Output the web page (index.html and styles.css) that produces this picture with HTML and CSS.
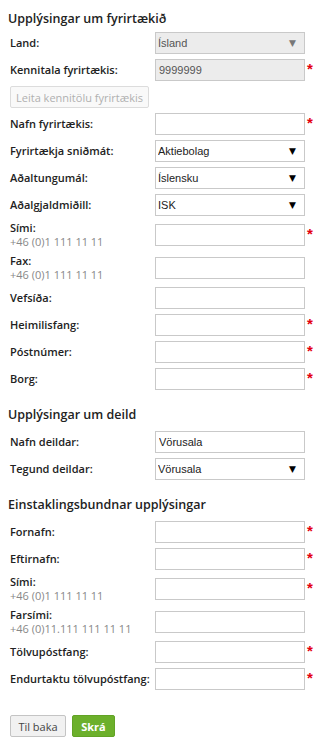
FILE: index.html
```html
<!DOCTYPE html>
<html lang="is">
<head>
    <meta charset="UTF-8">
    <meta name="viewport" content="width=device-width, initial-scale=1.0">
    <title>Skráning</title>
    <link rel="stylesheet" href="styles.css">
</head>
<body>
    <form class="reg-form" onsubmit="return false;">
        <div class="section first">
            <h2>Upplýsingar um fyrirtækið</h2>
            <div class="row">
                <label class="lbl">Land:</label>
                <div class="control">
                    <span class="select locked"><select class="field"><option>Ísland</option></select></span>
                </div>
            </div>
            <div class="row">
                <label class="lbl">Kennitala fyrirtækis:</label>
                <div class="control">
                    <input type="text" class="field locked" value="9999999" readonly>
                    <span class="req">*</span>
                </div>
            </div>
            <div class="row">
                <button type="button" class="lookup-btn">Leita kennitölu fyrirtækis</button>
            </div>
            <div class="row">
                <label class="lbl">Nafn fyrirtækis:</label>
                <div class="control"><input type="text" class="field"><span class="req">*</span></div>
            </div>
            <div class="row">
                <label class="lbl">Fyrirtækja sniðmát:</label>
                <div class="control">
                    <span class="select"><select class="field"><option>Aktiebolag</option></select></span>
                </div>
            </div>
            <div class="row">
                <label class="lbl">Aðaltungumál:</label>
                <div class="control">
                    <span class="select"><select class="field"><option>Íslensku</option></select></span>
                </div>
            </div>
            <div class="row">
                <label class="lbl">Aðalgjaldmiðill:</label>
                <div class="control">
                    <span class="select"><select class="field"><option>ISK</option></select></span>
                </div>
            </div>
            <div class="row">
                <label class="lbl two-line">Sími:<span class="hint">+46 (0)1 111 11 11</span></label>
                <div class="control"><input type="text" class="field"><span class="req">*</span></div>
            </div>
            <div class="row">
                <label class="lbl two-line">Fax:<span class="hint">+46 (0)1 111 11 11</span></label>
                <div class="control"><input type="text" class="field"></div>
            </div>
            <div class="row">
                <label class="lbl">Vefsíða:</label>
                <div class="control"><input type="text" class="field"></div>
            </div>
            <div class="row">
                <label class="lbl">Heimilisfang:</label>
                <div class="control"><input type="text" class="field"><span class="req">*</span></div>
            </div>
            <div class="row">
                <label class="lbl">Póstnúmer:</label>
                <div class="control"><input type="text" class="field"><span class="req">*</span></div>
            </div>
            <div class="row">
                <label class="lbl">Borg:</label>
                <div class="control"><input type="text" class="field"><span class="req">*</span></div>
            </div>
        </div>

        <div class="section">
            <h2>Upplýsingar um deild</h2>
            <div class="row">
                <label class="lbl">Nafn deildar:</label>
                <div class="control"><input type="text" class="field" value="Vörusala"></div>
            </div>
            <div class="row">
                <label class="lbl">Tegund deildar:</label>
                <div class="control">
                    <span class="select"><select class="field"><option>Vörusala</option></select></span>
                </div>
            </div>
        </div>

        <div class="section">
            <h2>Einstaklingsbundnar upplýsingar</h2>
            <div class="row">
                <label class="lbl">Fornafn:</label>
                <div class="control"><input type="text" class="field"><span class="req">*</span></div>
            </div>
            <div class="row">
                <label class="lbl">Eftirnafn:</label>
                <div class="control"><input type="text" class="field"><span class="req">*</span></div>
            </div>
            <div class="row">
                <label class="lbl two-line">Sími:<span class="hint">+46 (0)1 111 11 11</span></label>
                <div class="control"><input type="text" class="field"><span class="req">*</span></div>
            </div>
            <div class="row">
                <label class="lbl two-line">Farsími:<span class="hint">+46 (0)11.111 111 11 11</span></label>
                <div class="control"><input type="text" class="field"></div>
            </div>
            <div class="row">
                <label class="lbl">Tölvupóstfang:</label>
                <div class="control"><input type="text" class="field"><span class="req">*</span></div>
            </div>
            <div class="row">
                <label class="lbl">Endurtaktu tölvupóstfang:</label>
                <div class="control"><input type="text" class="field"><span class="req">*</span></div>
            </div>
        </div>

        <div class="button-container">
            <button type="button" class="back-btn">Til baka</button>
            <button type="submit" class="save-btn">Skrá</button>
        </div>
    </form>
</body>
</html>
```

FILE: styles.css
```css
body {
    margin: 0;
    font-family: "Open Sans", Arial, sans-serif;
    background-color: #fff;
    color: #222;
}
.reg-form {
    padding: 10px 8px 0 8px;
    width: 315px;
}
.section h2 {
    font-size: 12.5px;
    font-weight: 600;
    line-height: 18px;
    color: #222;
    margin: 16px 0 7px 0;
}
.section.first h2 {
    margin: 0 0 4px 0;
}
.row {
    display: flex;
    align-items: center;
    padding-left: 2px;
    margin-bottom: 5px;
}
.lbl {
    width: 145px;
    flex-shrink: 0;
    font-size: 11px;
    font-weight: 600;
    line-height: 22px;
    color: #222;
}
.lbl.two-line {
    line-height: 14px;
}
.hint {
    display: block;
    font-weight: 400;
    color: #888;
}
.control {
    display: flex;
    align-items: flex-start;
}
.field {
    display: block;
    width: 150px;
    height: 22px;
    box-sizing: border-box;
    border: 1px solid #c9c9c9;
    border-radius: 0;
    padding: 0 3px;
    margin: 0;
    font-family: "Liberation Sans", Arial, sans-serif;
    font-size: 11px;
    color: #222;
    background-color: #fff;
    outline: none;
}
.field.locked,
.select.locked .field {
    background-color: #ececec;
    color: #555;
}
.select {
    position: relative;
    display: block;
    height: 22px;
}
.select select {
    appearance: none;
    -webkit-appearance: none;
    padding-left: 2px;
}
.select::after {
    content: "\25BC";
    position: absolute;
    right: 9px;
    top: 5px;
    font-family: "DejaVu Sans", sans-serif;
    font-size: 9px;
    line-height: 12px;
    color: #000;
    pointer-events: none;
}
.select.locked::after {
    color: #777;
}
.req {
    color: #e3000f;
    font-family: "Liberation Sans", Arial, sans-serif;
    font-weight: bold;
    font-size: 15px;
    line-height: 14px;
    margin: 3px 0 0 2px;
}
.lookup-btn {
    width: 139px;
    height: 22px;
    padding: 0;
    border: 1px solid #dcdcdc;
    border-radius: 2px;
    background-color: #f9f9f9;
    color: #b0b0b0;
    font-family: "Open Sans", Arial, sans-serif;
    font-size: 11px;
}
.button-container {
    display: flex;
    gap: 6px;
    margin-top: 25px;
    padding-left: 2px;
}
.back-btn,
.save-btn {
    height: 22px;
    border-radius: 2px;
    font-family: "Open Sans", Arial, sans-serif;
    font-size: 11px;
    cursor: pointer;
}
.back-btn {
    width: 56px;
    padding: 0;
    border: 1px solid #c4c4c4;
    background-color: #f1f1f1;
    color: #444;
}
.save-btn {
    width: 43px;
    padding: 0;
    border: 1px solid #62a325;
    background-color: #6cb02b;
    color: #fff;
    font-weight: bold;
}
```
